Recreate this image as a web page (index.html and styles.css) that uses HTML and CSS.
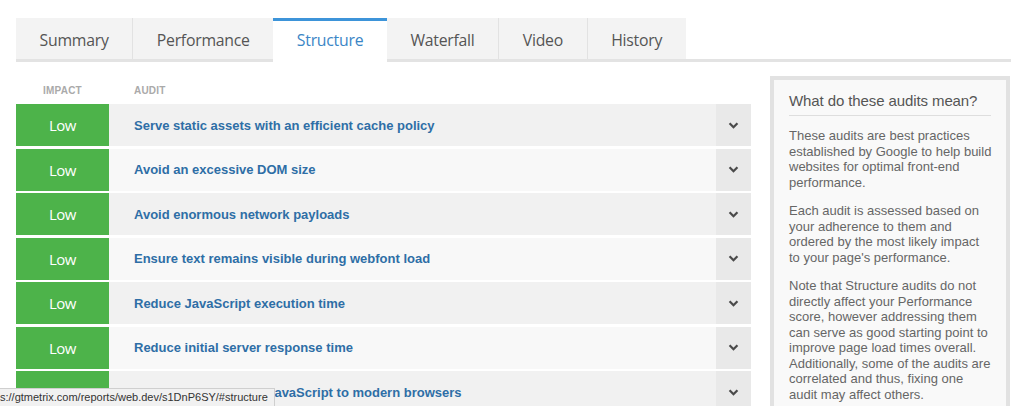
FILE: index.html
```html
<!DOCTYPE html>
<html>
<head>
<meta charset="utf-8">
<link rel="stylesheet" href="styles.css">
</head>
<body>
<div class="page">
  <nav class="tabs">
    <div class="tab">Summary</div>
    <div class="tab">Performance</div>
    <div class="tab active">Structure</div>
    <div class="tab">Waterfall</div>
    <div class="tab">Video</div>
    <div class="tab">History</div>
  </nav>
  <div class="main">
    <div class="audits">
      <div class="head">
        <div class="h-impact">IMPACT</div>
        <div class="h-audit">AUDIT</div>
      </div>
      <div class="row"><div class="impact">Low</div><div class="name">Serve static assets with an efficient cache policy</div><div class="toggle"><svg viewBox="0 0 12 8" width="11" height="7"><path d="M1.5 1.5 L6 6 L10.5 1.5" fill="none" stroke="#4a4a4a" stroke-width="2.6"/></svg></div></div>
      <div class="row"><div class="impact">Low</div><div class="name">Avoid an excessive DOM size</div><div class="toggle"><svg viewBox="0 0 12 8" width="11" height="7"><path d="M1.5 1.5 L6 6 L10.5 1.5" fill="none" stroke="#4a4a4a" stroke-width="2.6"/></svg></div></div>
      <div class="row"><div class="impact">Low</div><div class="name">Avoid enormous network payloads</div><div class="toggle"><svg viewBox="0 0 12 8" width="11" height="7"><path d="M1.5 1.5 L6 6 L10.5 1.5" fill="none" stroke="#4a4a4a" stroke-width="2.6"/></svg></div></div>
      <div class="row"><div class="impact">Low</div><div class="name">Ensure text remains visible during webfont load</div><div class="toggle"><svg viewBox="0 0 12 8" width="11" height="7"><path d="M1.5 1.5 L6 6 L10.5 1.5" fill="none" stroke="#4a4a4a" stroke-width="2.6"/></svg></div></div>
      <div class="row"><div class="impact">Low</div><div class="name">Reduce JavaScript execution time</div><div class="toggle"><svg viewBox="0 0 12 8" width="11" height="7"><path d="M1.5 1.5 L6 6 L10.5 1.5" fill="none" stroke="#4a4a4a" stroke-width="2.6"/></svg></div></div>
      <div class="row"><div class="impact">Low</div><div class="name">Reduce initial server response time</div><div class="toggle"><svg viewBox="0 0 12 8" width="11" height="7"><path d="M1.5 1.5 L6 6 L10.5 1.5" fill="none" stroke="#4a4a4a" stroke-width="2.6"/></svg></div></div>
      <div class="row"><div class="impact">Low</div><div class="name">Avoid serving legacy JavaScript to modern browsers</div><div class="toggle"><svg viewBox="0 0 12 8" width="11" height="7"><path d="M1.5 1.5 L6 6 L10.5 1.5" fill="none" stroke="#4a4a4a" stroke-width="2.6"/></svg></div></div>
    </div>
    <aside class="info">
      <h3 class="info-title">What do these audits mean?</h3>
      <p>These audits are best practices established by Google to help build websites for optimal front-end performance.</p>
      <p>Each audit is assessed based on your adherence to them and ordered by the most likely impact to your page's performance.</p>
      <p>Note that Structure audits do not directly affect your Performance score, however addressing them can serve as good starting point to improve page load times overall. Additionally, some of the audits are correlated and thus, fixing one audit may affect others.</p>
    </aside>
  </div>
</div>
<div class="status">s://gtmetrix.com/reports/web.dev/s1DnP6SY/#structure</div>
</body>
</html>
```

FILE: styles.css
```css
html, body {
  margin: 0;
  padding: 0;
  background: #fff;
  overflow: hidden;
}
body {
  width: 1024px;
  height: 406px;
  font-family: "Liberation Sans", Arial, sans-serif;
}
.page {
  padding: 18px 13px 0 16px;
}
.tabs {
  display: flex;
  border-bottom: 3px solid #e3e3e3;
  height: 41px;
}
.tab {
  font-family: "Open Sans", sans-serif;
  font-size: 15.8px;
  color: #555;
  background: #f3f3f3;
  padding: 3px 23.6px 0 23.6px;
  line-height: 38px;
  border-left: 1px solid #e2e2e2;
  letter-spacing: -0.25px;
}
.tab:first-child {
  border-left: none;
}
.tab.active {
  background: #fff;
  color: #3b86c6;
  border-top: 3px solid #3d94d9;
  border-left: none;
  padding-top: 0;
  line-height: 38px;
  height: 41px;
  margin-bottom: -3px;
  padding-bottom: 3px;
}
.tab.active + .tab {
  border-left: none;
}
.main {
  display: flex;
  align-items: flex-start;
  gap: 19px;
  padding-top: 14px;
}
.audits {
  width: 735px;
  flex: none;
}
.head {
  display: flex;
  height: 28px;
  align-items: center;
  font-size: 10px;
  font-weight: bold;
  color: #aaa;
  letter-spacing: 0.2px;
}
.h-impact {
  width: 93px;
  text-align: center;
}
.h-audit {
  padding-left: 25px;
}
.row {
  display: flex;
  height: 42px;
  margin-bottom: 2.5px;
  background: #f1f1f1;
}
.row:nth-child(odd) {
  background: #f8f8f8;
}
.impact {
  width: 93px;
  flex: none;
  background: #4db34a;
  color: #fff;
  font-family: "Open Sans", sans-serif;
  font-size: 15px;
  letter-spacing: -0.5px;
  display: flex;
  align-items: center;
  justify-content: center;
}
.name {
  flex: 1;
  display: flex;
  align-items: center;
  padding-left: 25px;
  font-size: 13px;
  font-weight: bold;
  color: #2e6ea6;
}
.toggle {
  width: 35px;
  flex: none;
  background: #e9e9e9;
  display: flex;
  align-items: center;
  justify-content: center;
}
.info {
  width: 240px;
  box-sizing: border-box;
  border: 4px solid #e2e2e2;
  background: #f9f9f9;
  padding: 12px 13px 10px 15px;
  height: 360px;
}
.info-title {
  margin: 0 2px 12px 0;
  font-weight: normal;
  font-size: 15px;
  color: #555;
  padding-bottom: 6px;
  border-bottom: 1px solid #dedede;
  letter-spacing: -0.1px;
}
.info p {
  margin: 0 0 13px 0;
  font-size: 13px;
  line-height: 15.5px;
  color: #666;
}
.status {
  position: absolute;
  left: 0;
  bottom: 0;
  height: 17px;
  padding: 0 6px 0 0;
  background: #f1f1f1;
  border: 1px solid #cfcfcf;
  border-left: none;
  border-bottom: none;
  font-family: "Liberation Sans", Arial, sans-serif;
  font-size: 11px;
  line-height: 17px;
  color: #333;
}
```
